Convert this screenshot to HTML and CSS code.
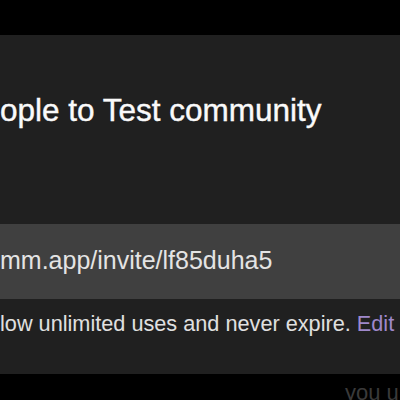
FILE: index.html
```html
<!DOCTYPE html>
<html lang="en">
<head>
<meta charset="utf-8">
<title>Invite people</title>
<link rel="stylesheet" href="styles.css">
</head>
<body>
<div class="modal">
  <h1 class="modal-title">ople to Test community</h1>
  <div class="invite-field">mm.app/invite/lf85duha5</div>
  <p class="help-text">low unlimited uses and never expire. <a class="edit-link" href="#">Edit</a></p>
</div>
<div class="backdrop-text">you u</div>
</body>
</html>
```
FILE: styles.css
```css
html, body {
  margin: 0;
  padding: 0;
  background: #000;
  overflow: hidden;
  height: 400px;
}
body {
  font-family: "Liberation Sans", Arial, sans-serif;
  color: #fff;
}
.modal {
  margin-top: 35px;
  background: #202020;
  padding: 57px 0 36px 0;
  overflow: hidden;
}
.modal-title {
  margin: 0;
  font-size: 31.5px;
  line-height: 36px;
  font-weight: normal;
  color: #fafafa;
  -webkit-text-stroke: 0.4px #fafafa;
  white-space: nowrap;
}
.invite-field {
  margin-top: 96px;
  height: 72px;
  padding-bottom: 3px;
  line-height: 72px;
  background: #404040;
  font-size: 25px;
  color: #e4e4e4;
  white-space: nowrap;
}
.help-text {
  margin: 11px 0 0 0;
  font-size: 21.7px;
  line-height: 28px;
  color: #e0e0e0;
  white-space: nowrap;
}
.edit-link {
  color: #9f88cb;
  text-decoration: none;
}
.backdrop-text {
  margin-top: 5px;
  padding-left: 345px;
  font-size: 22px;
  line-height: 28px;
  color: #3a3a3a;
  white-space: nowrap;
}
```
